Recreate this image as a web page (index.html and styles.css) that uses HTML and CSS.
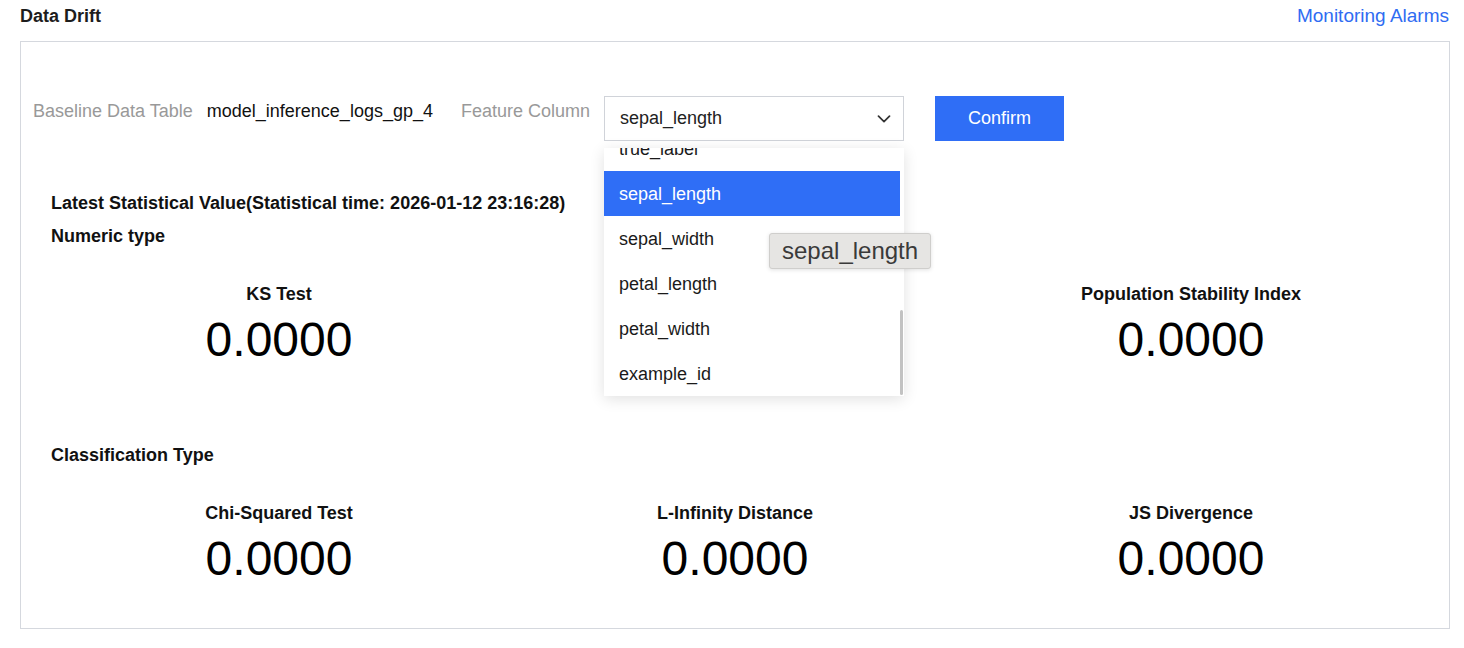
FILE: index.html
```html
<!DOCTYPE html>
<html lang="en">
<head>
<meta charset="utf-8">
<title>Data Drift</title>
<link rel="stylesheet" href="styles.css">
</head>
<body>
<div class="page">
  <div class="header">
    <div class="title">Data Drift</div>
    <a class="link" href="#">Monitoring Alarms</a>
  </div>
  <div class="panel">
    <div class="controls">
      <span class="ctl-label">Baseline Data Table</span>
      <span class="ctl-value">model_inference_logs_gp_4</span>
      <span class="ctl-label">Feature Column</span>
      <div class="select-wrap">
        <div class="select">
          <span class="select-text">sepal_length</span>
          <svg class="chevron" width="14" height="8" viewBox="0 0 14 8"><path d="M1.5 1.2 L7 6.6 L12.5 1.2" fill="none" stroke="#333" stroke-width="1.7" stroke-linecap="round" stroke-linejoin="round"/></svg>
        </div>
        <div class="dropdown">
          <ul class="options">
            <li class="option">true_label</li>
            <li class="option selected">sepal_length</li>
            <li class="option">sepal_width</li>
            <li class="option">petal_length</li>
            <li class="option">petal_width</li>
            <li class="option">example_id</li>
          </ul>
          <div class="scroll-thumb"></div>
        </div>
        <div class="tooltip">sepal_length</div>
      </div>
      <button class="btn">Confirm</button>
    </div>

    <div class="stats">
      <div class="section-title">Latest Statistical Value(Statistical time: 2026-01-12 23:16:28)</div>
      <div class="section-title sub">Numeric type</div>
      <div class="metrics">
        <div class="metric">
          <div class="metric-label">KS Test</div>
          <div class="metric-value">0.0000</div>
        </div>
        <div class="metric hidden-under">
          <div class="metric-label">Wasserstein Distance</div>
          <div class="metric-value">0.0000</div>
        </div>
        <div class="metric">
          <div class="metric-label">Population Stability Index</div>
          <div class="metric-value">0.0000</div>
        </div>
      </div>
      <div class="section-title classification">Classification Type</div>
      <div class="metrics">
        <div class="metric">
          <div class="metric-label">Chi-Squared Test</div>
          <div class="metric-value">0.0000</div>
        </div>
        <div class="metric">
          <div class="metric-label">L-Infinity Distance</div>
          <div class="metric-value">0.0000</div>
        </div>
        <div class="metric">
          <div class="metric-label">JS Divergence</div>
          <div class="metric-value">0.0000</div>
        </div>
      </div>
    </div>
  </div>
</div>
</body>
</html>
```

FILE: styles.css
```css
* { box-sizing: border-box; }

body {
  margin: 0;
  background: #ffffff;
  font-family: "Liberation Sans", Arial, Helvetica, sans-serif;
  font-size: 18px;
  color: #111;
}

.page {
  padding: 0 14px 0 20px;
}

.header {
  display: flex;
  justify-content: space-between;
  align-items: center;
  height: 32px;
  margin-bottom: 9px;
}

.title {
  font-size: 18px;
  font-weight: 700;
  line-height: 32px;
  color: #1d1d1d;
}

.link {
  font-size: 19px;
  line-height: 32px;
  color: #2f6cf2;
  text-decoration: none;
  margin-right: 1px;
}

.panel {
  border: 1px solid #d5d8de;
  padding: 54px 30px 41px 12px;
}

.controls {
  display: flex;
  align-items: flex-start;
  height: 45px;
}

.ctl-label {
  color: #999999;
  line-height: 30px;
  margin-right: 14px;
  white-space: nowrap;
}

.ctl-value {
  color: #111;
  line-height: 30px;
  margin-right: 28px;
  white-space: nowrap;
}

.select-wrap {
  position: relative;
  margin-right: 31px;
}

.select {
  width: 300px;
  height: 45px;
  border: 1px solid #d0d3d9;
  background: #fff;
  display: flex;
  align-items: center;
  justify-content: space-between;
  padding: 0 12px 0 15px;
}

.select-text {
  color: #222;
}

.chevron {
  display: block;
}

.dropdown {
  position: absolute;
  top: 52px;
  left: 0;
  width: 300px;
  height: 248px;
  overflow: hidden;
  background: #fff;
  box-shadow: 0 3px 14px rgba(0, 0, 0, 0.12);
  z-index: 10;
}

.options {
  list-style: none;
  margin: -22px 0 0 0;
  padding: 0;
  width: 296px;
}

.option {
  height: 45px;
  line-height: 46px;
  padding-left: 15px;
  color: #1a1a1a;
}

.option.selected {
  background: #2f6ef6;
  color: #fff;
}

.scroll-thumb {
  position: absolute;
  right: 1px;
  bottom: 1px;
  width: 3px;
  height: 85px;
  border-radius: 2px;
  background: #c2c2c2;
}

.tooltip {
  position: absolute;
  top: 137px;
  left: 165px;
  height: 36px;
  padding: 0 12px;
  line-height: 34px;
  font-size: 24px;
  color: #3a3a3a;
  background: #e6e5e3;
  border: 1px solid #cfcecc;
  border-radius: 3px;
  box-shadow: 0 1px 4px rgba(0, 0, 0, 0.12);
  white-space: nowrap;
  z-index: 20;
}

.btn {
  width: 129px;
  height: 45px;
  border: none;
  background: #2f6ef6;
  color: #fff;
  font-family: inherit;
  font-size: 18px;
  padding: 0;
}

.stats {
  margin-left: 18px;
  margin-top: 50px;
}

.section-title {
  font-size: 18px;
  font-weight: 700;
  line-height: 24px;
  color: #111;
}

.section-title.sub {
  margin-top: 9px;
}

.section-title.classification {
  margin-top: 75px;
}

.metrics {
  display: grid;
  grid-template-columns: repeat(3, 1fr);
  margin-top: 34px;
  text-align: center;
}

.metric-label {
  font-size: 18px;
  font-weight: 700;
  line-height: 24px;
  color: #111;
}

.metric-value {
  font-size: 48px;
  line-height: 56px;
  margin-top: 6px;
  color: #000;
}
```
